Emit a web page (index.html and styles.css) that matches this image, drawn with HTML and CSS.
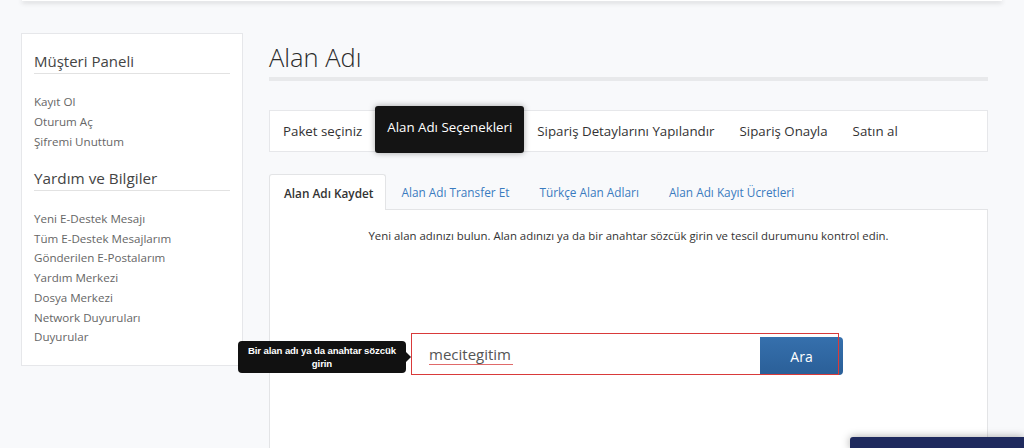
FILE: index.html
```html
<!DOCTYPE html>
<html lang="tr">
<head>
<meta charset="UTF-8">
<meta name="viewport" content="width=device-width, initial-scale=1.0">
<title>Alan Adı</title>
<link rel="stylesheet" href="styles.css">
</head>
<body>

<div class="topbar"></div>

<div class="wrap">
<aside class="sidebar">
<h3 class="side-title">Müşteri Paneli</h3>
<ul class="side-links">
<li><a href="#">Kayıt Ol</a></li>
<li><a href="#">Oturum Aç</a></li>
<li><a href="#">Şifremi Unuttum</a></li>
</ul>
<h3 class="side-title second">Yardım ve Bilgiler</h3>
<ul class="side-links tight">
<li><a href="#">Yeni E-Destek Mesajı</a></li>
<li><a href="#">Tüm E-Destek Mesajlarım</a></li>
<li><a href="#">Gönderilen E-Postalarım</a></li>
<li><a href="#">Yardım Merkezi</a></li>
<li><a href="#">Dosya Merkezi</a></li>
<li><a href="#">Network Duyuruları</a></li>
<li><a href="#">Duyurular</a></li>
</ul>
</aside>

<main class="main">
<h1 class="page-title">Alan Adı</h1>
<div class="title-rule"></div>

<div class="steps">
<span class="step">Paket seçiniz</span>
<span class="step active">Alan Adı Seçenekleri</span>
<span class="step">Sipariş Detaylarını Yapılandır</span>
<span class="step">Sipariş Onayla</span>
<span class="step">Satın al</span>
</div>

<div class="tabs">
<a class="tab active" href="#">Alan Adı Kaydet</a>
<a class="tab" href="#">Alan Adı Transfer Et</a>
<a class="tab" href="#">Türkçe Alan Adları</a>
<a class="tab" href="#">Alan Adı Kayıt Ücretleri</a>
</div>

<div class="tab-content">
<p class="lead">Yeni alan adınızı bulun. Alan adınızı ya da bir anahtar sözcük girin ve tescil durumunu kontrol edin.</p>

<form class="search" onsubmit="return false">
<div class="tip">Bir alan adı ya da anahtar sözcük girin</div>
<input class="search-input" type="text" value="mecitegitim">
<button class="search-btn" type="submit">Ara</button>
</form>
</div>
</main>
</div>

<div class="chat-bar"></div>

</body>
</html>
```

FILE: styles.css
```css
body {
    margin: 0;
    background-color: #f8f9fb;
    font-family: "Open Sans", "Noto Sans", sans-serif;
    color: #333;
    overflow: hidden;
}

.topbar {
    height: 1px;
    margin: 0 22px;
    background-color: #fff;
    box-shadow: 0 1px 5px rgba(0, 0, 0, 0.45);
}

.wrap {
    display: flex;
    gap: 26px;
    width: 967px;
    margin: 32px 0 0 21px;
    align-items: flex-start;
}

/* sol menu */
.sidebar {
    width: 222px;
    background-color: #fff;
    border: 1px solid #e6e7ea;
    padding: 16px 12px 18px 12px;
    box-sizing: border-box;
}
.side-title {
    margin: 0;
    font-size: 15px;
    font-weight: 400;
    line-height: 22px;
    color: #444;
    border-bottom: 1px solid #e2e2e2;
    padding-bottom: 1px;
}
.side-title.second {
    margin-top: 15px;
    font-size: 15.3px;
}
.side-links {
    list-style: none;
    margin: 18px 0 0 0;
    padding: 0;
}
.side-links li {
    line-height: 20px;
    font-size: 11.6px;
}
.side-links.tight li {
    line-height: 19.7px;
}
.side-links a {
    color: #666;
    text-decoration: none;
}

/* icerik */
.main {
    flex: 1;
}
.page-title {
    margin: 9px 0 0 0;
    font-size: 25.5px;
    font-weight: 300;
    line-height: 30px;
    color: #2b2b2b;
}
.title-rule {
    height: 4px;
    margin-top: 5px;
    background-color: #e8e9eb;
}

.steps {
    display: flex;
    align-items: stretch;
    margin-top: 29px;
    height: 42px;
    background-color: #fff;
    border: 1px solid #e6e7ea;
    box-sizing: border-box;
    padding-left: 1px;
}
.step {
    display: flex;
    align-items: center;
    padding: 0 12px;
    margin-right: 1px;
    font-size: 13.3px;
    color: #333;
}
.step.active {
    margin-top: -5px;
    margin-bottom: -2px;
    background-color: #141414;
    color: #fff;
    border-radius: 3px;
    box-shadow: 0 0 6px rgba(0, 0, 0, 0.35);
    padding-bottom: 6px;
}

.tabs {
    display: flex;
    margin-top: 22px;
    height: 35px;
    border-bottom: 1px solid #e3e4e6;
}
.tab {
    display: flex;
    align-items: center;
    padding: 0 14px;
    font-size: 11.8px;
    color: #3a7bbf;
    text-decoration: none;
    border: 1px solid transparent;
    border-bottom: none;
    border-radius: 3px 3px 0 0;
}
.tab.active {
    color: #333;
    font-weight: 600;
    background-color: #fff;
    border-color: #e3e4e6;
    margin-bottom: -1px;
    padding-right: 12px;
}

.tab-content {
    height: 260px;
    border: 1px solid #e3e4e6;
    border-top: none;
    background-color: #fff;
    padding-top: 17px;
}
.lead {
    margin: 0;
    text-align: center;
    font-size: 11.4px;
    line-height: 18px;
    color: #333;
}

.search {
    position: relative;
    display: flex;
    align-items: flex-end;
    width: 432px;
    margin: 88px 0 0 141px;
}
.search::after {
    content: "";
    position: absolute;
    left: 0;
    top: 0;
    width: 428px;
    height: 42px;
    border: 1px solid #d93a3a;
    box-sizing: border-box;
    pointer-events: none;
}
.search-input {
    width: 428px;
    height: 42px;
    box-sizing: border-box;
    border: none;
    outline: 0;
    padding: 0 18px;
    font-family: "Open Sans", "Noto Sans", sans-serif;
    font-size: 15px;
    color: #555;
    background: #fff linear-gradient(#e06a6a, #e06a6a) no-repeat 18px 31px / 84px 1px;
}
.search-btn {
    width: 83px;
    height: 38px;
    margin-left: -79px;
    border: none;
    border-radius: 0 4px 4px 0;
    background: linear-gradient(#3670ad, #2a5f98);
    color: #fff;
    font-family: "Open Sans", "Noto Sans", sans-serif;
    font-size: 14px;
    cursor: pointer;
}

.tip {
    position: absolute;
    right: 100%;
    top: 8px;
    margin-right: 5px;
    width: 168px;
    height: 32px;
    box-sizing: border-box;
    padding: 3px 5px;
    background-color: #111;
    color: #fff;
    border-radius: 4px;
    font-family: "Liberation Sans", Arial, sans-serif;
    font-size: 9.6px;
    font-weight: 700;
    line-height: 13px;
    letter-spacing: -0.1px;
    text-align: center;
}
.tip::after {
    content: "";
    position: absolute;
    left: 100%;
    top: 11px;
    border: 5px solid transparent;
    border-left-color: #111;
}

.chat-bar {
    position: fixed;
    right: 0;
    bottom: 0;
    width: 174px;
    height: 11px;
    background-color: #1f2a5e;
    border-radius: 3px 0 0 0;
    box-shadow: 0 0 8px rgba(0, 0, 0, 0.35);
}
```
